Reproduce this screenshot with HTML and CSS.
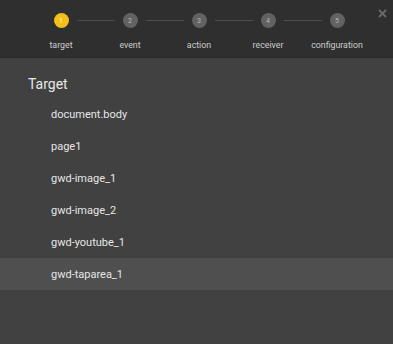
FILE: index.html
```html
<!DOCTYPE html>
<html>
<head>
<meta charset="utf-8">
<link rel="stylesheet" href="styles.css">
</head>
<body>
<div class="dialog">
  <header class="wizard">
    <div class="track">
      <span class="dot dot-active">1</span><span class="line"></span>
      <span class="dot">2</span><span class="line"></span>
      <span class="dot">3</span><span class="line"></span>
      <span class="dot">4</span><span class="line"></span>
      <span class="dot">5</span>
    </div>
    <div class="labels">
      <span>target</span><span>event</span><span>action</span><span>receiver</span><span>configuration</span>
    </div>
    <button class="close" aria-label="close">
      <svg width="9" height="9" viewBox="0 0 9 9"><path d="M1 1L8 8M8 1L1 8" stroke="#6a6a6a" stroke-width="1.8" fill="none"/></svg>
    </button>
  </header>
  <main class="body">
    <h2 class="title">Target</h2>
    <ul class="list">
      <li>document.body</li>
      <li>page1</li>
      <li>gwd-image_1</li>
      <li>gwd-image_2</li>
      <li>gwd-youtube_1</li>
      <li class="selected">gwd-taparea_1</li>
    </ul>
  </main>
</div>
</body>
</html>
```
FILE: styles.css
```css
* { box-sizing: border-box; }
html, body { margin: 0; padding: 0; }
body {
  width: 393px;
  height: 344px;
  background: #414141;
  font-family: Roboto, "Noto Sans", sans-serif;
  overflow: hidden;
}
.dialog { display: flex; flex-direction: column; height: 344px; }
.wizard {
  position: relative;
  height: 58px;
  background: #2f2f2f;
  border-bottom: 1px solid #2a2a2a;
  padding-top: 13px;
}
.track {
  display: flex;
  align-items: center;
  padding-left: 53.5px;
  height: 15px;
}
.dot {
  width: 15px;
  height: 15px;
  border-radius: 50%;
  background: #626262;
  color: #b8b8b8;
  font-size: 7px;
  display: flex;
  align-items: center;
  justify-content: center;
  flex: none;
}
.dot-active { background: #f3c019; color: #fff6d6; }
.line {
  width: 38px;
  height: 1px;
  margin: 0 8px;
  background: #4e4e4e;
  flex: none;
}
.labels {
  display: grid;
  grid-template-columns: repeat(5, 69px);
  padding-left: 26.5px;
  margin-top: 11px;
  color: #cccccc;
  font-size: 8.8px;
  line-height: 12px;
}
.labels span { text-align: center; }
.close {
  position: absolute;
  right: 5px;
  top: 8px;
  width: 11px;
  height: 11px;
  padding: 1px;
  border: 0;
  background: none;
  display: flex;
}
.body { flex: 1; }
.title {
  margin: 0;
  padding: 17px 0 0 28px;
  height: 40px;
  font-weight: 400;
  font-size: 14px;
  line-height: 18px;
  color: #e8e8e8;
}
.list { list-style: none; margin: 0; padding: 0; }
.list li {
  height: 32px;
  line-height: 33px;
  padding-left: 51px;
  font-size: 11px;
  color: #e6e6e6;
}
.list li.selected { background: #4f4f4f; }
```
